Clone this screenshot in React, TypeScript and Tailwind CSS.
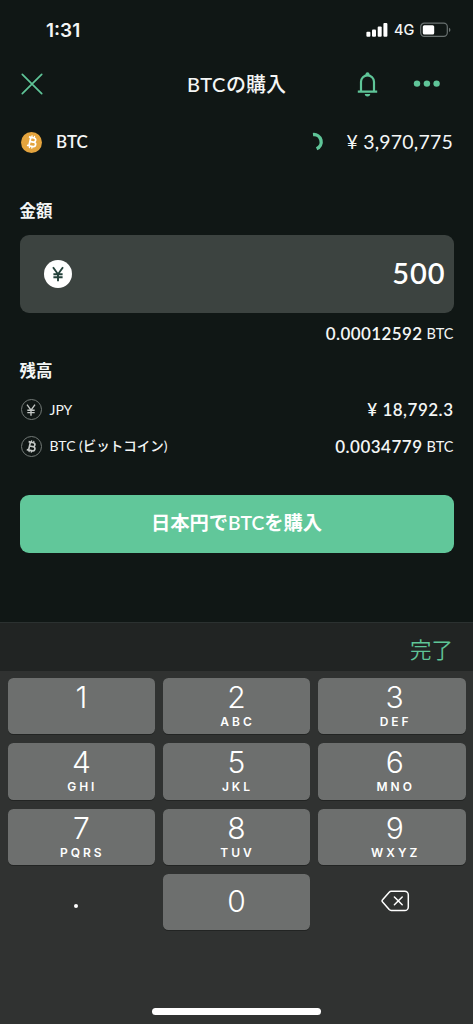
import React from "react";

const sans = "font-['Lato','Noto_Sans_CJK_JP',sans-serif]";
const system = "font-['Inter','Noto_Sans_CJK_JP',sans-serif]";

function BitcoinGlyph({ className }: { className: string }) {
  return (
    <svg viewBox="0 0 20 20" className={className} fill="none" stroke="currentColor" strokeWidth="1.9" strokeLinejoin="round">
      <g transform="rotate(13 10 10)">
        <path d="M5.4 5.2h5.8a2.3 2.3 0 0 1 0 4.6H7.8M7.6 5.2v9.6M7.8 9.8h4.3a2.4 2.4 0 0 1 0 5H5.4" />
        <path d="M8.6 2.8v2.4M11.3 2.8v2.4M8.6 14.8v2.4M11.3 14.8v2.4" strokeWidth="1.4" />
      </g>
    </svg>
  );
}

function YenGlyph({ className }: { className: string }) {
  return (
    <svg viewBox="0 0 20 20" className={className} fill="none" stroke="currentColor">
      <path d="M5 3.2 10 10.2 15 3.2M10 10v7.2M5.4 10.3h9.2M5.4 13.2h9.2" />
    </svg>
  );
}

function StatusBar() {
  return (
    <div className={`flex h-[60px] items-center justify-between pl-[46px] pr-[22px] ${system}`}>
      <span className="text-[19px] leading-none font-semibold">1:31</span>
      <div className="flex items-center">
        <svg width="22" height="14" viewBox="0 0 22 14" fill="white">
          <rect x="0.4" y="8.8" width="4" height="5" rx="1" />
          <rect x="6" y="6.5" width="4" height="7.3" rx="1" />
          <rect x="11.7" y="3.6" width="4" height="10.2" rx="1" />
          <rect x="17.4" y="0" width="4" height="13.8" rx="1" />
        </svg>
        <span className="ml-[6px] w-[26px] pt-[1px] text-[14.5px] leading-none font-medium">4G</span>
        <svg width="31" height="16" viewBox="0 0 31 16">
          <rect x="0.7" y="1.2" width="26.6" height="13.2" rx="3.6" fill="none" stroke="#697170" strokeWidth="1.2" />
          <rect x="2.8" y="3.2" width="11.4" height="9.3" rx="1.6" fill="white" />
          <path d="M29 5.7a2.4 2.4 0 0 1 0 4.4z" fill="#697170" />
        </svg>
      </div>
    </div>
  );
}

function Header() {
  return (
    <header className="grid h-[48px] grid-cols-[120px_1fr_120px] items-center">
      <svg className="ml-[21px]" width="22" height="22" viewBox="0 0 22 22" stroke="#5fc598" strokeWidth="1.7" strokeLinecap="round">
        <path d="M1.3 1.3 20.7 20.7M20.7 1.3 1.3 20.7" />
      </svg>
      <h1 className="flex items-center justify-center text-[20px] leading-none font-medium">
        <span className="tracking-[0.5px]">BTC</span>
        <span>の購入</span>
      </h1>
      <div className="flex items-center text-[#5fc598]">
        <svg className="ml-[4px]" width="21" height="25" viewBox="0 0 21 25" fill="none" stroke="currentColor" strokeWidth="2.2">
          <path d="M0.8 19.6h19.4M4 19.6V9.8a6.5 6.5 0 0 1 13 0v9.8" />
          <circle cx="10.5" cy="2.2" r="2" fill="currentColor" stroke="none" />
          <path d="M7.8 22.1h5.4a2.7 2.4 0 0 1-5.4 0z" fill="currentColor" stroke="none" />
        </svg>
        <svg className="ml-[35px]" width="28" height="8" viewBox="0 0 28 8" fill="currentColor">
          <circle cx="4" cy="3.6" r="3.2" />
          <circle cx="13.9" cy="3.6" r="3.2" />
          <circle cx="23.6" cy="3.6" r="3.2" />
        </svg>
      </div>
    </header>
  );
}

function PriceRow() {
  return (
    <div className="mt-[16px] flex h-[36px] items-center pl-[21px] pr-[20px]">
      <div className="flex size-[21px] items-center justify-center rounded-full bg-[#e4a43e] text-white">
        <BitcoinGlyph className="size-[18px]" />
      </div>
      <span className="ml-[14px] pb-[2px] text-[17px] leading-none font-semibold">BTC</span>
      <svg className="ml-auto" width="12" height="20" viewBox="0 0 12 20" fill="none" stroke="#5fc598" strokeWidth="3.4">
        <path d="M1 2.6A7.4 7.4 0 0 1 4.6 16.8" />
      </svg>
      <span className="ml-[22px] w-[107px] pb-[1px] text-right text-[19.5px] leading-none tracking-[0.2px] whitespace-nowrap">¥ 3,970,775</span>
    </div>
  );
}

function BalanceRow({ icon, label, value, unit }: { icon: React.ReactNode; label: React.ReactNode; value: string; unit?: string }) {
  return (
    <div className="flex h-[36.5px] items-center">
      <span className="ml-[1px] flex size-[21px] items-center justify-center rounded-full border border-[#737a77] text-[#c5c9c7]">{icon}</span>
      <span className="ml-[8px] text-[14px] leading-none">{label}</span>
      <span className="ml-auto text-[17px] leading-none font-semibold tracking-[0.5px]">{value}</span>
      {unit && <span className="ml-[4px] pt-[2px] text-[14.5px] leading-none">{unit}</span>}
    </div>
  );
}

const keys: [string, string][] = [
  ["1", ""],
  ["2", "ABC"],
  ["3", "DEF"],
  ["4", "GHI"],
  ["5", "JKL"],
  ["6", "MNO"],
  ["7", "PQRS"],
  ["8", "TUV"],
  ["9", "WXYZ"],
];

function Keypad() {
  return (
    <div className={`grow bg-[#303231] ${system}`}>
      <div className="flex h-[49px] items-center justify-end border-t border-[#2b3130] bg-[#212423] pr-[20px] pt-[3px] font-['Noto_Sans_CJK_JP',sans-serif] text-[21.5px] leading-none font-[350] text-[#5fc598]">
        完了
      </div>
      <div className="grid grid-cols-3 gap-x-[7.5px] gap-y-[9px] px-[7.5px] pt-[7px]">
        {keys.map(([digit, letters]) => (
          <button
            key={digit}
            className="flex h-[56.3px] flex-col items-center rounded-[5.5px] bg-[#6d6f6e] pt-[3px] text-white shadow-[0_1px_0_#222423] nth-[3n]:pl-[6px]"
          >
            <span className="text-[30px] leading-[32px] font-[350]">{digit}</span>
            <span className="mt-[2px] pl-[2px] text-[12px] leading-[14px] font-semibold tracking-[3px]">{letters}</span>
          </button>
        ))}
        <div className="flex h-[56px] items-center justify-center pt-[8px] pr-[10px]">
          <span className="size-[4px] rounded-full bg-white" />
        </div>
        <button className="flex h-[56px] items-center justify-center rounded-[5.5px] bg-[#6d6f6e] pb-[2px] text-[30px] leading-none font-[350] text-white shadow-[0_1px_0_#222423]">0</button>
        <div className="flex h-[56px] items-center justify-center pb-[2px] pl-[7px]">
          <svg width="29" height="22" viewBox="0 0 29 22" fill="none" stroke="white" strokeWidth="1.5" strokeLinecap="round" strokeLinejoin="round">
            <path d="M10.2 1.3h13.5a3.6 3.6 0 0 1 3.6 3.6v12a3.6 3.6 0 0 1-3.6 3.6H10.2a3 3 0 0 1-2-.9L1.6 12a1.6 1.6 0 0 1 0-2.2l6.6-7.6a3 3 0 0 1 2-.9z" />
            <path d="m13.4 7 7.8 7.8M21.2 7l-7.8 7.8" />
          </svg>
        </div>
      </div>
    </div>
  );
}

export default function App() {
  return (
    <div className={`relative flex h-[1024px] w-[473px] flex-col overflow-hidden bg-[#101715] text-[#f4f6f5] ${sans}`}>
      <StatusBar />
      <Header />
      <PriceRow />
      <main className="flex h-[462px] flex-col px-[19.5px]">
        <h2 className="mt-[43px] text-[16.5px] leading-[17px] font-bold">金額</h2>
        <div className="mt-[15px] flex h-[77.5px] items-center justify-between rounded-[9px] bg-[#3c4340] pr-[8px] pl-[24px] text-white">
          <span className="flex size-[28px] items-center justify-center rounded-full bg-white text-[#24413b]">
            <YenGlyph className="size-[20px] stroke-[1.9]" />
          </span>
          <span className="pb-[2px] text-[29px] leading-none font-semibold tracking-[0.9px]">500</span>
        </div>
        <div className="mt-[10px] flex h-[21px] items-center justify-end">
          <span className="text-[17px] leading-none font-semibold tracking-[0.4px]">0.00012592</span>
          <span className="ml-[4px] pt-[2px] text-[14.5px] leading-none">BTC</span>
        </div>
        <h2 className="mt-[19px] text-[16.5px] leading-[17px] font-bold">残高</h2>
        <div className="mt-[12px]">
          <BalanceRow icon={<YenGlyph className="size-[16px] stroke-[1.7]" />} label="JPY" value="¥ 18,792.3" />
          <BalanceRow icon={<BitcoinGlyph className="size-[17px]" />} label={<>BTC (<span className="text-[13.5px] font-medium">ビットコイン</span>)</>} value="0.0034779" unit="BTC" />
        </div>
        <button className="mt-[30px] flex h-[58px] shrink-0 items-center justify-center rounded-[9px] bg-[#61c79a] pb-[1px] text-[19.3px] leading-none font-semibold text-white">
          日本円でBTCを購入
        </button>
      </main>
      <Keypad />
      <div className="absolute bottom-[9.5px] left-[152px] h-[6.5px] w-[169px] rounded-full bg-white" />
    </div>
  );
}
